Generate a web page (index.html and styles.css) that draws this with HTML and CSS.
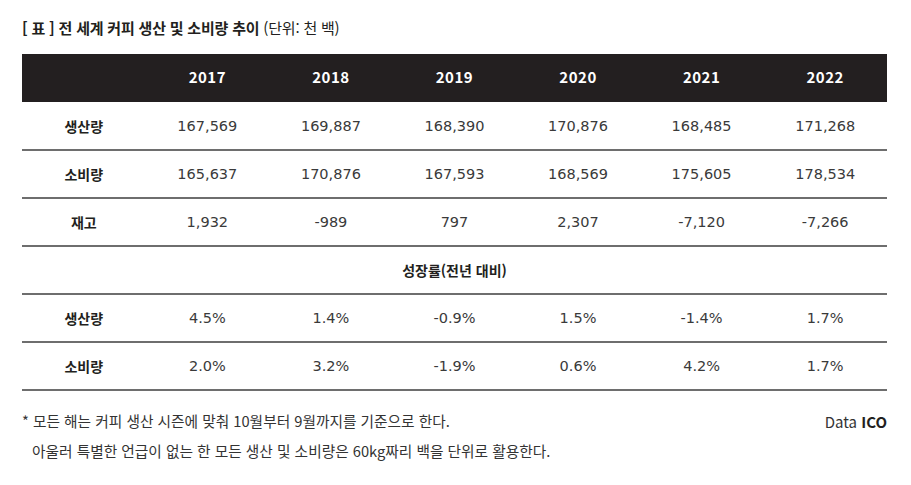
FILE: index.html
```html
<!DOCTYPE html>
<html lang="ko">

<head>
  <title>전 세계 커피 생산 및 소비량 추이</title>
  <meta charset="utf-8">
  <meta name="viewport" content="width=device-width, initial-scale=1">
  <link rel="stylesheet" href="styles.css">
</head>

<body>
  <div class="wrap">
    <h3 class="caption">[ 표 ] 전 세계 커피 생산 및 소비량 추이 <span class="unit">(단위: 천 백)</span></h3>

    <table class="coffee">
      <thead>
        <tr>
          <th></th>
          <th>2017</th>
          <th>2018</th>
          <th>2019</th>
          <th>2020</th>
          <th>2021</th>
          <th>2022</th>
        </tr>
      </thead>
      <tbody>
        <tr>
          <th>생산량</th>
          <td>167,569</td><td>169,887</td><td>168,390</td><td>170,876</td><td>168,485</td><td>171,268</td>
        </tr>
        <tr>
          <th>소비량</th>
          <td>165,637</td><td>170,876</td><td>167,593</td><td>168,569</td><td>175,605</td><td>178,534</td>
        </tr>
        <tr>
          <th>재고</th>
          <td>1,932</td><td>-989</td><td>797</td><td>2,307</td><td>-7,120</td><td>-7,266</td>
        </tr>
        <tr>
          <th class="group" colspan="7">성장률(전년 대비)</th>
        </tr>
        <tr>
          <th>생산량</th>
          <td>4.5%</td><td>1.4%</td><td>-0.9%</td><td>1.5%</td><td>-1.4%</td><td>1.7%</td>
        </tr>
        <tr>
          <th>소비량</th>
          <td>2.0%</td><td>3.2%</td><td>-1.9%</td><td>0.6%</td><td>4.2%</td><td>1.7%</td>
        </tr>
      </tbody>
    </table>

    <div class="foot">
      <div class="notes">
        <p>* 모든 해는 커피 생산 시즌에 맞춰 10월부터 9월까지를 기준으로 한다.</p>
        <p class="indent">아울러 특별한 언급이 없는 한 모든 생산 및 소비량은 60kg짜리 백을 단위로 활용한다.</p>
      </div>
      <div class="source">Data <b>ICO</b></div>
    </div>
  </div>
</body>

</html>
```

FILE: styles.css
```css
* {
  box-sizing: border-box;
  margin: 0px;
}

body {
  font-family: "Noto Sans CJK KR", "Noto Sans", sans-serif;
  color: #231f20;
  background-color: white;
}

.wrap {
  padding: 16px 24px 0 22px;
}

/* Title above the table */
.caption {
  font-size: 15px;
  font-weight: bold;
  line-height: 24px;
  letter-spacing: -0.2px;
}

.caption .unit {
  font-weight: normal;
}

.coffee {
  width: 100%;
  margin-top: 14px;
  border-collapse: collapse;
  table-layout: fixed;
  font-size: 15px;
}

.coffee thead th {
  background-color: #231f20;
  color: white;
  height: 48px;
  padding-bottom: 4px;
  font-weight: bold;
  letter-spacing: 0.5px;
}

.coffee tbody th,
.coffee tbody td {
  height: 48px;
  text-align: center;
  border-bottom: 2px solid #6e6e6e;
}

.coffee tbody th {
  font-size: 14px;
  font-weight: bold;
}

/* numbers use a wider face, like the original */
.coffee tbody td {
  font-family: "DejaVu Sans", "Noto Sans CJK KR", sans-serif;
  font-weight: normal;
  font-size: 14.5px;
  color: #3a3a3a;
}

.coffee .group {
  font-size: 14px;
}

/* Notes and source under the table */
.foot {
  display: flex;
  justify-content: space-between;
  padding-top: 20px;
  font-size: 14.7px;
  color: #333;
}

.notes p {
  line-height: 32px;
  margin-top: -6px;
}

.notes p.indent {
  padding-left: 10px;
  margin-top: -2px;
}

.source {
  font-size: 15px;
  line-height: 22px;
}

.source b {
  color: #231f20;
}
```
